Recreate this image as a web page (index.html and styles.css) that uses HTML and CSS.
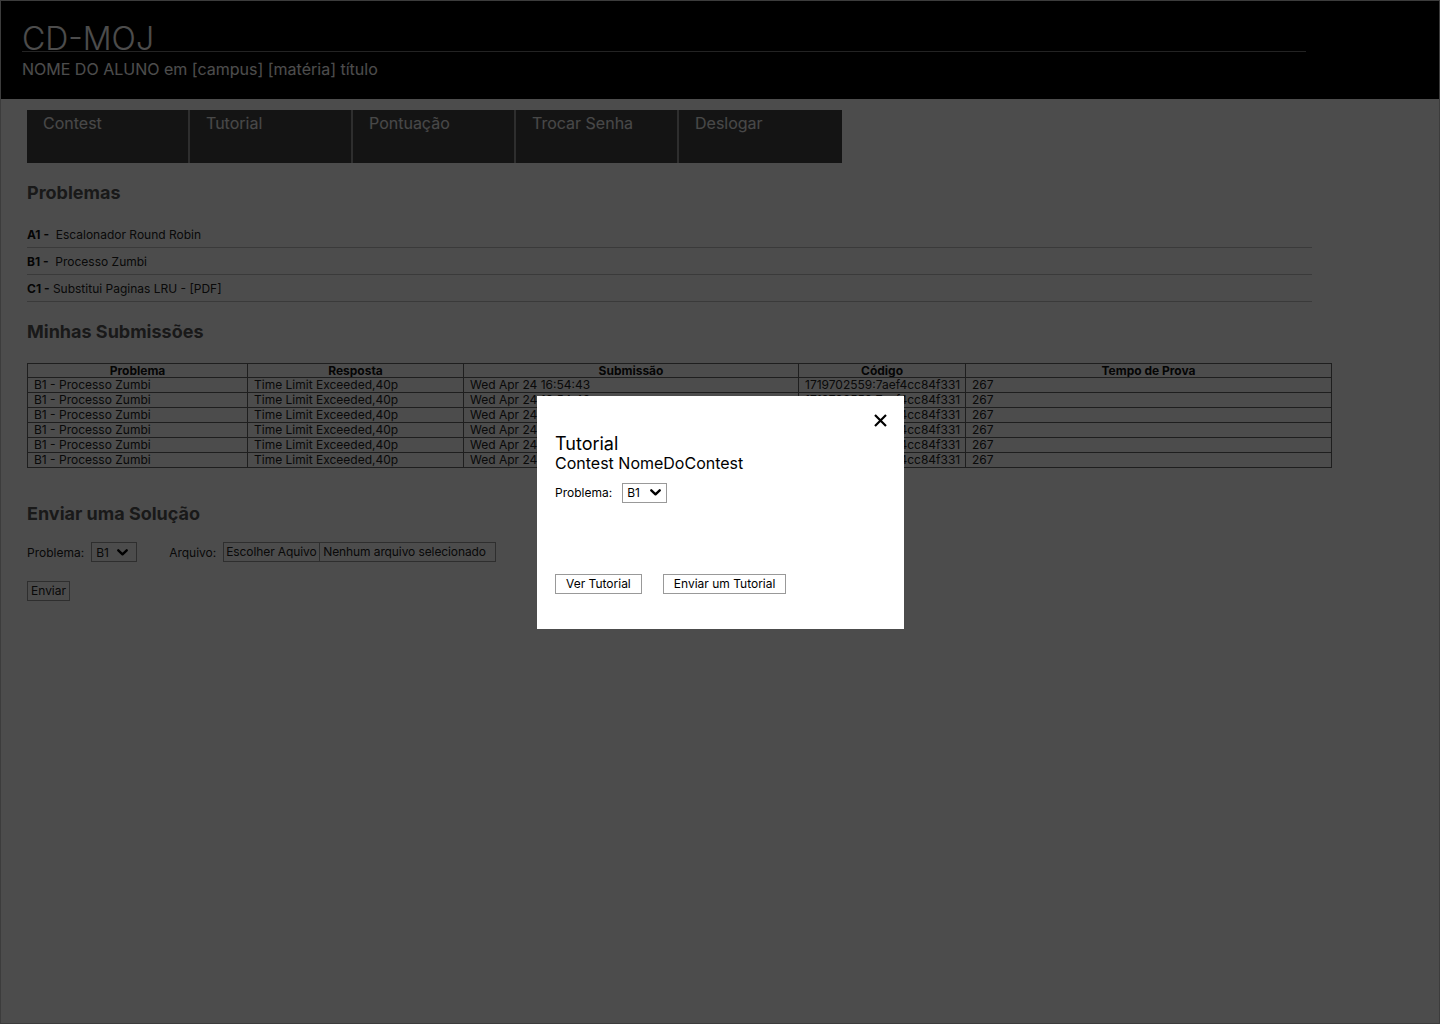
FILE: index.html
```html
<!DOCTYPE html>
<html lang="pt-BR">
<head>
<meta charset="utf-8">
<title>CD-MOJ</title>
<link rel="stylesheet" href="styles.css">
</head>
<body>
<div class="frame">
  <header class="top">
    <h1 class="brand">CD-MOJ</h1>
    <p class="user">NOME DO ALUNO em [campus] [matéria] título</p>
  </header>
  <main class="content">
    <nav class="menu">
      <a href="#">Contest</a>
      <a href="#">Tutorial</a>
      <a href="#">Pontuação</a>
      <a href="#">Trocar Senha</a>
      <a href="#">Deslogar</a>
    </nav>

    <h2 class="title title-first">Problemas</h2>
    <ul class="problems">
      <li><b>A1 -</b>&nbsp; Escalonador Round Robin</li>
      <li><b>B1 -</b>&nbsp; Processo Zumbi</li>
      <li><b>C1 -</b> Substitui Paginas LRU - [PDF]</li>
    </ul>

    <h2 class="title title-subs">Minhas Submissões</h2>
    <table class="subs">
      <colgroup>
        <col class="c1"><col class="c2"><col class="c3"><col class="c4"><col class="c5">
      </colgroup>
      <thead>
        <tr><th>Problema</th><th>Resposta</th><th>Submissão</th><th>Código</th><th>Tempo de Prova</th></tr>
      </thead>
      <tbody>
        <tr><td>B1 - Processo Zumbi</td><td>Time Limit Exceeded,40p</td><td>Wed Apr 24 16:54:43</td><td>1719702559:7aef4cc84f331</td><td>267</td></tr>
        <tr><td>B1 - Processo Zumbi</td><td>Time Limit Exceeded,40p</td><td>Wed Apr 24 16:54:43</td><td>1719702559:7aef4cc84f331</td><td>267</td></tr>
        <tr><td>B1 - Processo Zumbi</td><td>Time Limit Exceeded,40p</td><td>Wed Apr 24 16:54:43</td><td>1719702559:7aef4cc84f331</td><td>267</td></tr>
        <tr><td>B1 - Processo Zumbi</td><td>Time Limit Exceeded,40p</td><td>Wed Apr 24 16:54:43</td><td>1719702559:7aef4cc84f331</td><td>267</td></tr>
        <tr><td>B1 - Processo Zumbi</td><td>Time Limit Exceeded,40p</td><td>Wed Apr 24 16:54:43</td><td>1719702559:7aef4cc84f331</td><td>267</td></tr>
        <tr><td>B1 - Processo Zumbi</td><td>Time Limit Exceeded,40p</td><td>Wed Apr 24 16:54:43</td><td>1719702559:7aef4cc84f331</td><td>267</td></tr>
      </tbody>
    </table>

    <h2 class="title title-send">Enviar uma Solução</h2>
    <form class="send">
      <span class="lbl">Problema:</span>
      <span class="select">B1
        <svg class="chev" width="11" height="7" viewBox="0 0 11 7"><path d="M1.3 1.3 L5.5 5.3 L9.7 1.3" fill="none" stroke="#000" stroke-width="2.4" stroke-linecap="round" stroke-linejoin="round"/></svg>
      </span>
      <span class="lbl lbl-file">Arquivo:</span>
      <span class="file"><span class="pick">Escolher Aquivo</span><span class="none">Nenhum arquivo selecionado</span></span>
    </form>
    <button class="btn btn-send" type="button">Enviar</button>
  </main>
</div>

<div class="overlay">
  <div class="modal">
    <div class="modal-top">
      <svg class="close" width="13" height="13" viewBox="0 0 13 13"><path d="M1 1 L12 12 M12 1 L1 12" fill="none" stroke="#000" stroke-width="2.2"/></svg>
    </div>
    <div class="m-title">Tutorial</div>
    <div class="m-sub">Contest NomeDoContest</div>
    <div class="m-row">
      <span class="lbl lbl-m">Problema:</span>
      <span class="select">B1
        <svg class="chev" width="11" height="7" viewBox="0 0 11 7"><path d="M1.3 1.3 L5.5 5.3 L9.7 1.3" fill="none" stroke="#000" stroke-width="2.4" stroke-linecap="round" stroke-linejoin="round"/></svg>
      </span>
    </div>
    <div class="m-actions">
      <button class="btn btn-m" type="button">Ver Tutorial</button>
      <button class="btn btn-m" type="button">Enviar um Tutorial</button>
    </div>
  </div>
</div>
</body>
</html>
```
FILE: styles.css
```css
body {
  margin: 0;
  font-family: Inter, "Noto Sans", sans-serif;
  background: #fff;
  color: #222;
}

.frame {
  min-height: 1024px;
  box-sizing: border-box;
  border: 1px solid #c8c8c8;
}

.top {
  background: #000;
  height: 98px;
  box-sizing: border-box;
  padding: 26px 0 0 21px;
}

.brand {
  margin: 0;
  width: 1284px;
  font-size: 32px;
  font-weight: 300;
  line-height: 24px;
  color: #fff;
  border-bottom: 1px solid #777;
}

.user {
  margin: 8px 0 0;
  font-size: 16px;
  line-height: 19px;
  color: #fff;
}

.content {
  padding: 11px 0 0 26px;
}

.menu {
  display: flex;
  width: 815px;
  height: 53px;
  background: #454545;
}

.menu a {
  width: 163px;
  box-sizing: border-box;
  padding: 4px 0 0 16px;
  font-size: 16px;
  line-height: 19px;
  color: #f2f2f2;
  text-decoration: none;
  border-right: 2px solid #9a9a9a;
}

.menu a:last-child {
  border-right: 0;
}

.title {
  margin: 18px 0 0;
  font-size: 18px;
  line-height: 22px;
  font-weight: 700;
  color: #555;
}

.title-first {
  margin-top: 19px;
}

.title-subs {
  margin-top: 19px;
}

.problems {
  list-style: none;
  margin: 17px 0 0;
  padding: 0;
  width: 1285px;
}

.problems li {
  font-size: 12px;
  line-height: 15px;
  padding: 6px 0 5px;
  border-bottom: 1px solid #c3c3c3;
  color: #222;
}

.problems b {
  color: #111;
}

.subs {
  margin-top: 20px;
  border-collapse: collapse;
  table-layout: fixed;
  width: 1304px;
  font-size: 12px;
  color: #222;
}

.subs .c1 { width: 220px; }
.subs .c2 { width: 216px; }
.subs .c3 { width: 335px; }
.subs .c4 { width: 167px; }
.subs .c5 { width: 366px; }

.subs th,
.subs td {
  border: 1px solid #666;
  padding: 0 0 0 6px;
  line-height: 14px;
  text-align: left;
  white-space: nowrap;
  overflow: hidden;
  font-weight: 400;
}

.subs th {
  padding: 0;
  line-height: 13px;
  text-align: center;
  font-weight: 700;
  color: #111;
}

.title-send {
  margin-top: 35px;
}

.send {
  display: flex;
  align-items: center;
  margin: 17px 0 0;
  font-size: 12px;
  color: #222;
}

.lbl {
  font-size: 12px;
  margin-right: 7px;
}

.lbl-file {
  margin-left: 32px;
}

.select {
  display: flex;
  align-items: center;
  justify-content: space-between;
  width: 46px;
  height: 20px;
  box-sizing: border-box;
  border: 1px solid #999;
  padding: 0 8px 0 4px;
  font-size: 12px;
  background: #fff;
}

.file {
  display: flex;
  width: 273px;
  height: 20px;
  box-sizing: border-box;
  border: 1px solid #999;
  font-size: 12px;
}

.file span {
  line-height: 18px;
  padding: 0 0 0 3px;
  white-space: nowrap;
}

.file .pick {
  width: 96px;
  box-sizing: border-box;
  padding-left: 2px;
  border-right: 1px solid #999;
  letter-spacing: -0.1px;
}

.file .none {
  letter-spacing: -0.1px;
}

.btn {
  font-family: Inter, "Noto Sans", sans-serif;
  font-size: 12px;
  height: 20px;
  box-sizing: border-box;
  border: 1px solid #999;
  background: #fff;
  color: #222;
  padding: 0 3px;
  border-radius: 0;
  line-height: 18px;
}

.btn-send {
  display: block;
  margin-top: 19px;
}

.overlay {
  position: fixed;
  inset: 0;
  background: rgba(0, 0, 0, 0.7);
  display: flex;
  align-items: center;
  justify-content: center;
}

.modal {
  width: 367px;
  height: 233px;
  box-sizing: border-box;
  background: #fff;
  padding: 18px 17px 0 18px;
  margin-left: 1px;
  color: #000;
}

.modal-top {
  display: flex;
  justify-content: flex-end;
  height: 13px;
}

.m-title {
  margin-top: 6px;
  font-size: 18px;
  line-height: 21px;
}

.m-sub {
  font-size: 16px;
  line-height: 19px;
}

.m-row {
  display: flex;
  align-items: center;
  margin-top: 10px;
  font-size: 12px;
}

.lbl-m {
  margin-right: 10px;
}

.modal .select {
  width: 45px;
  padding-right: 5px;
}

.m-actions {
  display: flex;
  gap: 21px;
  margin-top: 71px;
}

.btn-m {
  padding: 0 10px;
  color: #000;
}
```
